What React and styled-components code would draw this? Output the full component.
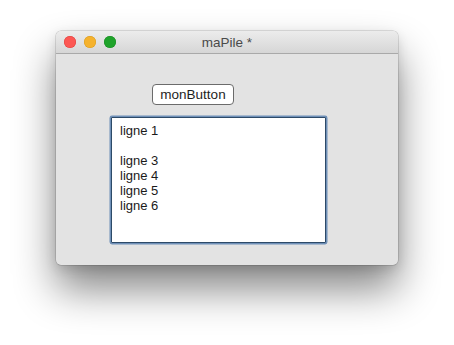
import React from "react";
import styled, { createGlobalStyle } from "styled-components";

const GlobalStyle = createGlobalStyle`
  html, body {
    margin: 0;
    padding: 0;
    background: #fff;
    font-family: "Liberation Sans", Arial, sans-serif;
  }
`;

const Page = styled.div`
  width: 454px;
  height: 345px;
  padding: 31px 0 0 56px;
  box-sizing: border-box;
  overflow: hidden;
`;

const Window = styled.div`
  width: 342px;
  height: 234px;
  border-radius: 5px;
  background: #e3e3e3;
  display: flex;
  flex-direction: column;
  overflow: hidden;
  box-shadow: 0 0 0 0.5px rgba(0, 0, 0, 0.22), 0 24px 42px rgba(0, 0, 0, 0.48),
    0 4px 12px rgba(0, 0, 0, 0.12);
`;

const TitleBar = styled.div`
  height: 22px;
  flex: none;
  display: flex;
  align-items: center;
  position: relative;
  background: linear-gradient(#ececec, #d6d6d6);
  border-bottom: 1px solid #a9a9a9;
  padding-left: 8px;
  gap: 8px;
`;

const Light = styled.span`
  width: 12px;
  height: 12px;
  border-radius: 50%;
  background: ${(p) => p.color};
  box-shadow: inset 0 0 0 0.5px ${(p) => p.edge};
`;

const Title = styled.div`
  position: absolute;
  left: 0;
  right: 0;
  top: 0;
  bottom: 0;
  display: flex;
  align-items: center;
  justify-content: center;
  font-size: 13.5px;
  color: #4a4a4a;
  pointer-events: none;
`;

const Body = styled.div`
  flex: 1;
  display: flex;
  flex-direction: column;
  align-items: flex-start;
  padding: 30px 0 0 55px;
`;

const Button = styled.button`
  margin-left: 41px;
  height: 21px;
  width: 82px;
  padding: 0;
  border: 1px solid #6b6b6b;
  border-radius: 4px;
  background: #fff;
  font-family: "Liberation Sans", Arial, sans-serif;
  font-size: 13.5px;
  color: #1e1e1e;
  line-height: 19px;
`;

const TextArea = styled.div`
  margin-top: 12px;
  width: 215px;
  height: 126px;
  box-sizing: border-box;
  background: #fff;
  border: 1px solid #2d4a68;
  box-shadow: 0 0 0 1.5px #6f90b8;
  border-radius: 1px;
  padding: 5px 8px;
  font-size: 13px;
  line-height: 15px;
  color: #1a1a1a;
`;

const Line = styled.div`
  height: 15px;
  white-space: pre;
`;

const lines = ["ligne 1", "", "ligne 3", "ligne 4", "ligne 5", "ligne 6"];

const App = () => {
  return (
    <>
      <GlobalStyle />
      <Page>
        <Window>
          <TitleBar>
            <Light color="#fc5753" edge="#de3f3b" />
            <Light color="#f5b22d" edge="#d89a1c" />
            <Light color="#1fa32b" edge="#178a20" />
            <Title>maPile *</Title>
          </TitleBar>
          <Body>
            <Button>monButton</Button>
            <TextArea>
              {lines.map((l, i) => (
                <Line key={i}>{l}</Line>
              ))}
            </TextArea>
          </Body>
        </Window>
      </Page>
    </>
  );
};

export default App;
